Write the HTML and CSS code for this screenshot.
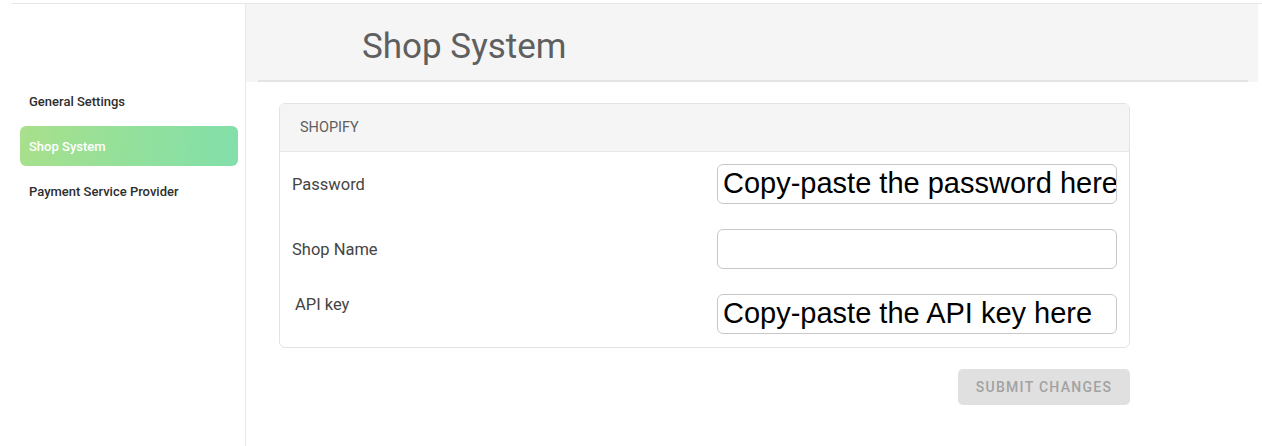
FILE: index.html
```html
<!DOCTYPE html>
<html>
<head>
<meta charset="utf-8">
<link rel="stylesheet" href="styles.css">
</head>
<body>
<div class="app">
  <aside class="sidebar">
    <nav class="nav">
      <div class="nav-item">General Settings</div>
      <div class="nav-item active">Shop System</div>
      <div class="nav-item">Payment Service Provider</div>
    </nav>
  </aside>
  <main class="main">
    <header class="header">
      <h1 class="title">Shop System</h1>
      <div class="header-rule"></div>
    </header>
    <section class="content">
      <div class="card">
        <div class="card-head">SHOPIFY</div>
        <div class="card-body">
          <div class="row">
            <span class="label">Password</span>
            <div class="field">Copy-paste the password here</div>
          </div>
          <div class="row">
            <span class="label">Shop Name</span>
            <div class="field"></div>
          </div>
          <div class="row">
            <span class="label label-api">API key</span>
            <div class="field">Copy-paste the API key here</div>
          </div>
        </div>
      </div>
      <div class="actions">
        <button class="submit" disabled>SUBMIT CHANGES</button>
      </div>
    </section>
  </main>
</div>
</body>
</html>
```

FILE: styles.css
```css
* { box-sizing: border-box; }
html, body { margin: 0; padding: 0; background: #fff; }
body {
  font-family: Roboto, "Liberation Sans", sans-serif;
  height: 446px;
  overflow: hidden;
}
.app {
  display: flex;
  margin: 3px 0 0 12px;
  border-top: 1px solid #e6e6e6;
  height: 443px;
}
.sidebar {
  width: 234px;
  border-right: 1px solid #e8e8e8;
  flex-shrink: 0;
}
.nav {
  display: flex;
  flex-direction: column;
  gap: 5px;
  padding: 77px 7px 0 8px;
}
.nav-item {
  height: 40px;
  display: flex;
  align-items: center;
  padding-left: 9px;
  font-size: 13px;
  font-weight: 500;
  color: #2e2e2e;
  border-radius: 6px;
}
.nav-item.active {
  color: #fff;
  background: linear-gradient(100deg, #a9e08b 0%, #93e09b 50%, #82dfaa 100%);
}
.main {
  flex: 1;
  display: flex;
  flex-direction: column;
  margin-right: 4px;
}
.header {
  background: #f5f5f5;
  height: 78px;
  display: flex;
  flex-direction: column;
  justify-content: flex-end;
}
.title {
  margin: 0 0 13px 116px;
  font-size: 35px;
  font-weight: 400;
  color: #5f5f5f;
  line-height: 40px;
}
.header-rule {
  height: 2px;
  background: #e4e4e4;
  margin: 0 10px 0 12px;
}
.content {
  padding: 21px 0 0 33px;
  width: 884px;
}
.card {
  border: 1px solid #e3e3e3;
  border-radius: 6px;
  overflow: hidden;
}
.card-head {
  height: 48px;
  background: #f5f5f5;
  border-bottom: 1px solid #e6e6e6;
  display: flex;
  align-items: center;
  padding-left: 20px;
  font-size: 14.5px;
  color: #606060;
}
.card-body {
  display: flex;
  flex-direction: column;
  gap: 25px;
  padding: 12px 12px 13px 12px;
}
.row {
  display: flex;
  align-items: center;
  justify-content: space-between;
}
.label {
  font-size: 16.5px;
  color: #444;
}
.label-api {
  padding-left: 3px;
  align-self: flex-start;
  margin-top: 1px;
}
.field {
  width: 400px;
  height: 40px;
  border: 1px solid #c8c8c8;
  border-radius: 6px;
  padding-left: 5px;
  font-family: "Liberation Sans", Arial, sans-serif;
  font-size: 29px;
  line-height: 36px;
  color: #000;
  white-space: nowrap;
  overflow: hidden;
}
.actions {
  display: flex;
  justify-content: flex-end;
  padding-top: 21px;
}
.submit {
  width: 172px;
  height: 36px;
  border: none;
  border-radius: 5px;
  background: #e0e0e0;
  color: #a2a2a2;
  font-family: Roboto, "Liberation Sans", sans-serif;
  font-size: 14px;
  font-weight: 500;
  letter-spacing: 1.3px;
}
```
